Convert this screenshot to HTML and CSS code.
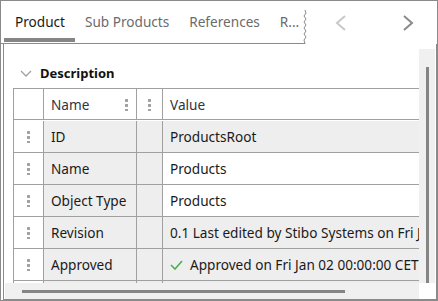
FILE: index.html
```html
<!DOCTYPE html>
<html lang="en">
<head>
  <meta charset="UTF-8" />
  <title>Product</title>
  <link rel="stylesheet" href="styles.css">
</head>
<body>
  <div class="frame">

    <!-- Tabs -->
    <div class="tabbar">
      <div class="tabs">
        <div class="tab active">Product</div>
        <div class="tab">Sub Products</div>
        <div class="tab">References</div>
        <div class="tab">R...</div>
      </div>
      <svg class="tear" width="6" height="34" viewBox="0 0 6 34">
        <polyline points="3,0 4,3 2,6 4,9 2,12 4,15 2,18 4,21 2,24 4,27 2,30 3,34" fill="none" stroke="#8a8a8a" stroke-width="1" />
      </svg>
      <div class="tab-nav">
        <svg class="nav-btn" width="28" height="16" viewBox="0 0 28 16">
          <polyline points="18,1 10,8 18,15" fill="none" stroke="#c8c8c8" stroke-width="2" />
        </svg>
        <svg class="nav-btn" width="28" height="16" viewBox="0 0 28 16">
          <polyline points="10,1 18,8 10,15" fill="none" stroke="#8a8a8a" stroke-width="2" />
        </svg>
      </div>
    </div>

    <!-- Panel -->
    <div class="panel">
      <div class="panel-body">
        <div class="viewport">
          <div class="section-head">
            <svg class="chev" width="12" height="7" viewBox="0 0 12 7">
              <polyline points="1,1 6,6 11,1" fill="none" stroke="#a0a0a0" stroke-width="1.3" />
            </svg>
            <span>Description</span>
          </div>

          <div class="grid">
            <div class="cell head"></div>
            <div class="cell head">Name<span class="dots"></span></div>
            <div class="cell head center"><span class="dots"></span></div>
            <div class="cell head">Value</div>

            <div class="cell center"><span class="dots"></span></div>
            <div class="cell gray">ID</div>
            <div class="cell gray"></div>
            <div class="cell gray">ProductsRoot</div>

            <div class="cell center"><span class="dots"></span></div>
            <div class="cell gray">Name</div>
            <div class="cell gray"></div>
            <div class="cell">Products</div>

            <div class="cell center"><span class="dots"></span></div>
            <div class="cell gray">Object Type</div>
            <div class="cell gray"></div>
            <div class="cell">Products</div>

            <div class="cell center"><span class="dots"></span></div>
            <div class="cell gray">Revision</div>
            <div class="cell gray"></div>
            <div class="cell gray">0.1 Last edited by Stibo Systems on Fri Jan 02</div>

            <div class="cell center"><span class="dots"></span></div>
            <div class="cell gray">Approved</div>
            <div class="cell gray"></div>
            <div class="cell gray">
              <svg class="check" width="13" height="10" viewBox="0 0 13 10">
                <polyline points="1,5 5,9 12,1" fill="none" stroke="#4caf50" stroke-width="1.6" />
              </svg>
              Approved on Fri Jan 02 00:00:00 CET
            </div>

            <div class="cell center"></div>
            <div class="cell gray"></div>
            <div class="cell gray"></div>
            <div class="cell gray"></div>
          </div>
        </div>
        <div class="vscroll"><div class="vthumb"></div></div>
      </div>
      <div class="hscroll-row">
        <div class="hscroll"><div class="hthumb"></div></div>
        <div class="corner"></div>
      </div>
    </div>

  </div>
</body>
</html>
```

FILE: styles.css
```css
/* Base */
* {
  margin: 0;
  padding: 0;
  box-sizing: border-box;
}
body {
  font-family: 'Noto Sans', 'Open Sans', sans-serif;
  font-size: 13.6px;
  color: #1a1a1a;
  background: #fff;
}

/* Outer frame */
.frame {
  width: 438px;
  height: 301px;
  border: 1px solid #8a8a8a;
  display: flex;
  flex-direction: column;
}

/* Tab bar */
.tabbar {
  display: flex;
  height: 43px;
  flex-shrink: 0;
}
.tabs {
  width: 304px;
  height: 43px;
  display: flex;
  padding-left: 3px;
  border-bottom: 1px solid #8a8a8a;
  overflow: hidden;
  white-space: nowrap;
}
.tab {
  height: 41px;
  padding: 4px 10px 0;
  display: flex;
  align-items: center;
  color: #6b6b6b;
  border-bottom: 4px solid transparent;
}
.tab:first-child {
  padding-left: 11px;
}
.tab.active {
  color: #1a1a1a;
  border-bottom-color: #858585;
}
.tear {
  margin-top: 9px;
  margin-left: -3px;
}
.tab-nav {
  display: flex;
  gap: 39px;
  padding: 14px 0 0 19px;
}

/* Panel */
.panel {
  flex: 1;
  margin-left: 2px;
  border-left: 1px solid #8a8a8a;
  border-bottom: 1px solid #8a8a8a;
  border-right: 1px solid #8a8a8a;
  padding: 5px 0 0 1px;
  display: flex;
  flex-direction: column;
  min-height: 0;
}
.panel-body {
  flex: 1;
  display: flex;
  min-height: 0;
}
.viewport {
  width: 414px;
  overflow: hidden;
}
.vscroll {
  width: 16px;
  background: #f0f0f0;
  display: flex;
  justify-content: center;
  padding-top: 18px;
}
.vthumb {
  width: 3px;
  height: 100%;
  background: #858585;
}
.hscroll-row {
  display: flex;
  height: 16px;
  flex-shrink: 0;
}
.hscroll {
  width: 414px;
  background: #f0f0f0;
  padding: 7px 0 0 17px;
}
.hthumb {
  width: 323px;
  height: 3px;
  background: #858585;
}

/* Section header */
.section-head {
  display: flex;
  align-items: center;
  height: 20px;
  margin: 14px 0 5px;
  padding-left: 15px;
  font-size: 13px;
  font-weight: bold;
  color: #111;
}
.chev {
  margin-right: 8px;
}

/* Grid */
.grid {
  margin-left: 8px;
  width: 600px;
  display: grid;
  grid-template-columns: 30px 93px 26px 451px;
  grid-auto-rows: 32px;
  border-left: 1px solid #a0a0a0;
  border-top: 1px solid #a0a0a0;
}
.cell {
  border-right: 1px solid #a0a0a0;
  border-bottom: 1px solid #a0a0a0;
  padding: 0 7px;
  display: flex;
  align-items: center;
  white-space: nowrap;
  overflow: hidden;
  background: #fff;
}
.cell.head {
  height: 31px;
  color: #2e3440;
  justify-content: space-between;
  padding-right: 8px;
}
.cell.center {
  justify-content: center;
  padding: 0;
}
.cell.gray {
  background: #eeeeee;
}
.dots {
  width: 3px;
  height: 13px;
  background: radial-gradient(circle, #a0a0a0 1.4px, transparent 1.6px) 0 0 / 3px 5px repeat-y;
}
.check {
  margin-right: 7px;
}
```
